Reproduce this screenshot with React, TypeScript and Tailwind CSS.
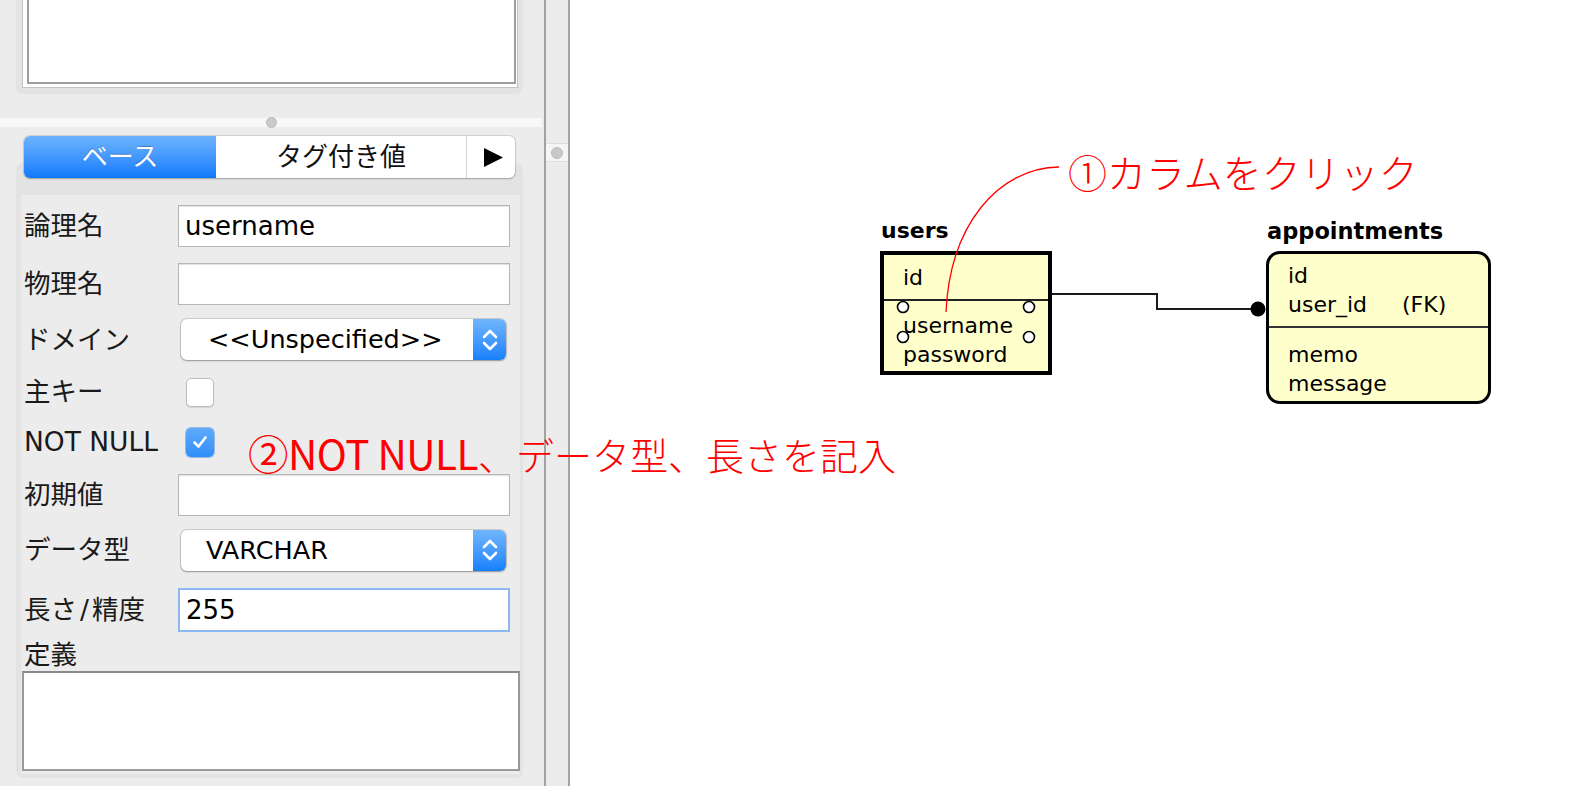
import React from "react";

const UI = "font-['DejaVu_Sans','Noto_Sans_CJK_JP',sans-serif]";

function TextInput({ value, focused }: { value?: string; focused?: boolean }) {
  return (
    <div
      className={
        focused
          ? "w-[332px] h-[44px] bg-white border-2 border-[#8db8f1] flex items-center pl-[6px] text-[26px] text-black"
          : "w-[332px] h-[42px] bg-white border border-[#b6b6b6] shadow-[inset_0_1px_1px_rgba(0,0,0,0.12)] flex items-center pl-[6px] text-[26px] text-black"
      }
    >
      {value}
    </div>
  );
}

function Select({ value, pad }: { value: string; pad: string }) {
  return (
    <div className="ml-[3px] w-[325px] h-[41px] rounded-[6px] bg-white flex shadow-[0_0_0_1px_rgba(0,0,0,0.13),0_1px_2px_rgba(0,0,0,0.28)]">
      <div className={"flex-1 flex items-center text-[25.5px] text-black " + pad}>{value}</div>
      <div className="w-[33px] rounded-r-[6px] bg-linear-to-b from-[#6fb5fc] to-[#1480fb] flex items-center justify-center">
        <svg width="18" height="26" viewBox="0 0 18 26">
          <path d="M3 10 L9 4 L15 10" fill="none" stroke="white" strokeWidth="2.6" strokeLinecap="round" strokeLinejoin="round" />
          <path d="M3 16 L9 22 L15 16" fill="none" stroke="white" strokeWidth="2.6" strokeLinecap="round" strokeLinejoin="round" />
        </svg>
      </div>
    </div>
  );
}

function Checkbox({ checked }: { checked?: boolean }) {
  return checked ? (
    <div className="ml-[8px] w-[28px] h-[29px] rounded-[5px] bg-linear-to-b from-[#5eaafb] to-[#2f8ef7] flex items-center justify-center shadow-[0_0_0_1px_rgba(30,110,220,0.4)]">
      <svg width="20" height="20" viewBox="0 0 20 20">
        <path d="M4.5 10.5 L8.5 14.5 L15.5 5.5" fill="none" stroke="white" strokeWidth="2.6" strokeLinecap="round" strokeLinejoin="round" />
      </svg>
    </div>
  ) : (
    <div className="ml-[8px] w-[28px] h-[29px] rounded-[5px] bg-white border border-[#bdbdbd] shadow-[0_1px_1px_rgba(0,0,0,0.12)]" />
  );
}

function Row({ h, label, children }: { h: string; label: React.ReactNode; children?: React.ReactNode }) {
  return (
    <div className={"flex items-center " + h}>
      <div className="w-[157px] pl-[3px] shrink-0 text-[26.5px] text-[#1a1a1a] whitespace-nowrap">{label}</div>
      {children}
    </div>
  );
}

export default function App() {
  return (
    <div className={"relative w-[1585px] h-[786px] overflow-hidden flex bg-white " + UI}>
      {/* Left panel */}
      <div className="w-[544px] h-full bg-[#ececec] flex flex-col shrink-0">
        {/* top group box */}
        <div className="ml-[16px] w-[507px] h-[94px] bg-[#e3e3e3] rounded-b-[7px] pl-[6px] pr-[5px] pb-[6px] flex flex-col">
          <div className="flex-1 bg-white border border-t-0 border-[#c4c4c4] pl-[4px] pr-[1px] pb-[3px] flex flex-col">
            <div className="flex-1 bg-white border-2 border-t-0 border-[#9d9d9d]" />
          </div>
        </div>
        {/* horizontal divider */}
        <div className="mt-[24px] w-[542px] h-[9px] bg-[#f8f8f8] flex items-center justify-center">
          <div className="w-[11px] h-[11px] rounded-full bg-[#cacaca] border border-[#b9b9b9]" />
        </div>
        {/* lower area */}
        <div className="mt-[9px] ml-[16px] w-[507px] flex flex-col">
          <div className="mx-[8px] relative z-10 flex h-[42px] rounded-[6px] bg-white overflow-hidden shadow-[0_0_0_1px_rgba(0,0,0,0.1),0_1px_2px_rgba(0,0,0,0.22)] text-[26px]">
            <div className="w-[192px] bg-linear-to-b from-[#6cb3fd] to-[#0a79fc] text-white flex items-center justify-center [text-shadow:0_-1px_0_rgba(0,0,0,0.25)]">
              ベース
            </div>
            <div className="w-[251px] border-r border-[#d2d2d2] flex items-center justify-center text-[#111]">タグ付き値</div>
            <div className="flex-1 flex items-center justify-center pl-[4px]">
              <svg width="21" height="21" viewBox="0 0 21 21">
                <path d="M1 1 L20 10.5 L1 20 Z" fill="black" />
              </svg>
            </div>
          </div>
          <div className="-mt-[15px] h-[615px] bg-[#e3e3e3] rounded-[7px] pt-[32px] pl-[5px] pr-[3px] pb-[4px] flex flex-col">
            <div className="flex-1 bg-[#ececec] pt-[2px] flex flex-col">
              <Row h="h-[58px]" label="論理名">
                <TextInput value="username" />
              </Row>
              <Row h="h-[58px]" label="物理名">
                <TextInput />
              </Row>
              <Row h="h-[53px]" label="ドメイン">
                <Select value="<<Unspecified>>" pad="pl-[27px]" />
              </Row>
              <Row h="h-[52px]" label="主キー">
                <Checkbox />
              </Row>
              <Row h="h-[48px]" label="NOT NULL">
                <Checkbox checked />
              </Row>
              <Row h="h-[58px]" label="初期値">
                <TextInput />
              </Row>
              <Row h="h-[52px]" label="データ型">
                <Select value="VARCHAR" pad="pl-[25px]" />
              </Row>
              <Row
                h="h-[68px]"
                label={
                  <span>
                    長さ<span className="mx-[3px]">/</span>精度
                  </span>
                }
              >
                <TextInput value="255" focused />
              </Row>
              <Row h="h-[22px]" label="定義" />
              <div className="mt-[5px] ml-[1px] h-[100px] bg-white border-2 border-[#999999] border-t-[#8a8a8a]" />
            </div>
          </div>
        </div>
      </div>

      {/* vertical splitter */}
      <div className="w-[26px] h-full shrink-0 bg-[#ececec] border-x-2 border-[#a2a2a2] flex flex-col">
        <div className="h-[143px]" />
        <div className="h-[19px] bg-[#f5f5f5] border-y border-[#dedede] flex items-center justify-center">
          <div className="w-[12px] h-[12px] rounded-full bg-[#c9c9c9] border border-[#bababa]" />
        </div>
      </div>

      {/* canvas */}
      <div className="relative flex-1 h-full bg-white text-black">
        {/* users */}
        <div className="absolute left-[311px] top-[217px] text-[22px] font-bold leading-[28px]">users</div>
        <div className="absolute left-[310px] top-[251px] w-[172px] h-[124px] bg-[#ffffcc] border-[4px] border-black flex flex-col text-[22px]">
          <div className="h-[46px] shrink-0 flex items-center pl-[19px] border-b-2 border-[#222]">id</div>
          <div className="pt-[10px] pl-[19px] leading-[29px]">
            <div>username</div>
            <div>password</div>
          </div>
        </div>

        {/* appointments */}
        <div className="absolute left-[697px] top-[217px] text-[22.5px] font-bold leading-[28px]">appointments</div>
        <div className="absolute left-[696px] top-[251px] w-[225px] h-[153px] bg-[#ffffcc] border-[3px] border-black rounded-[14px] flex flex-col text-[22px] leading-[29px]">
          <div className="pt-[7px] pb-[7px] pl-[19px] border-b-2 border-[#333]">
            <div>id</div>
            <div className="flex">
              <span className="w-[114px]">user_id</span>
              <span>(FK)</span>
            </div>
          </div>
          <div className="pt-[12px] pl-[19px]">
            <div>memo</div>
            <div>message</div>
          </div>
        </div>

        {/* lines and handles */}
        <svg className="absolute left-0 top-0 pointer-events-none" width="1015" height="786" viewBox="0 0 1015 786">
          <path d="M482 294 H587 V309 H688" fill="none" stroke="#1a1a1a" strokeWidth="2" />
          <circle cx="688" cy="309" r="7.5" fill="black" />
          <path d="M489 167 C 428 168 380 225 376 312" fill="none" stroke="#ff0000" strokeWidth="1.3" />
          <circle cx="333" cy="307" r="5.5" fill="white" stroke="black" strokeWidth="1.6" />
          <circle cx="459" cy="307" r="5.5" fill="white" stroke="black" strokeWidth="1.6" />
          <circle cx="333" cy="337" r="5.5" fill="white" stroke="black" strokeWidth="1.6" />
          <circle cx="459" cy="337" r="5.5" fill="white" stroke="black" strokeWidth="1.6" />
        </svg>

        {/* annotation 1 */}
        <div className="absolute left-[498px] top-[147px] text-[39px] leading-[48px] text-[#ff0000] font-['Noto_Sans_CJK_JP',sans-serif] font-light whitespace-nowrap">
          ①カラムをクリック
        </div>
      </div>

      {/* annotation 2 overlays panel and canvas */}
      <div className="absolute left-[248px] top-[429px] z-20 text-[#ff0000] font-['Noto_Sans_CJK_JP',sans-serif] whitespace-nowrap leading-[48px] flex items-baseline">
        <span className="text-[40.5px] font-normal tracking-[-0.5px]">②NOT NULL</span>
        <span className="text-[38px] font-light">、データ型、長さを記入</span>
      </div>
    </div>
  );
}
